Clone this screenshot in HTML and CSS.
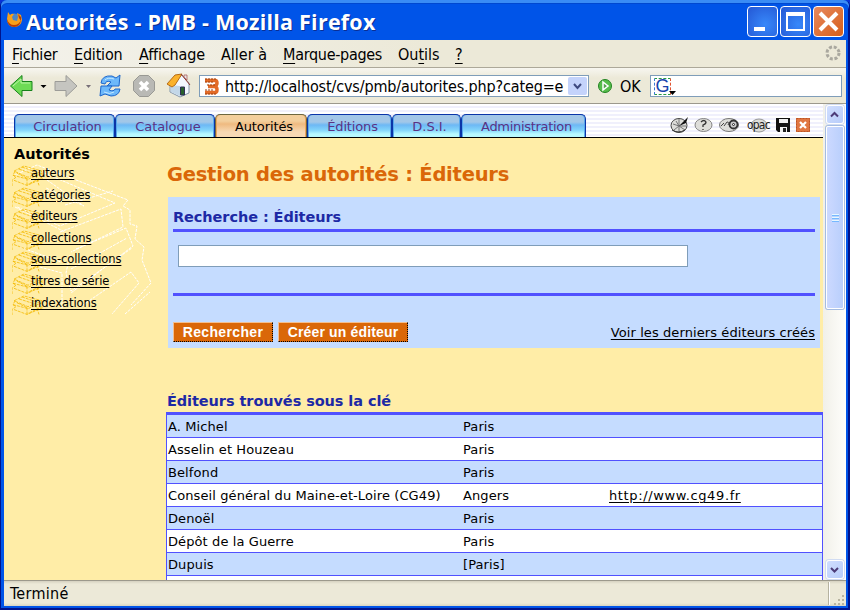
FILE: index.html
```html
<!DOCTYPE html>
<html lang="fr">
<head>
<meta charset="utf-8">
<title>Autorités - PMB</title>
<link rel="stylesheet" href="styles.css">
</head>
<body>
<div class="window">
  <header class="titlebar">
    <svg class="fox" width="16" height="16" viewBox="0 0 16 16"><circle cx="8.500" cy="7" r="5.500" fill="#4b86c8"/><path d="M2 0l2 3q2-2 4-1L6 5l1 3 4 1 1-4-1-4 4 2 1 5q-1 7-8 7-7-1-7-8z" fill="#f7a01c"/><path d="M1 7q2 6 7 6 5 0 7-5-1 7-7 7-7-1-7-8M12 2l3 3v4l-2-3z" fill="#b83c08"/></svg>
    <span class="caption">Autorités - PMB - Mozilla Firefox</span>
    <div class="winbtns">
      <span class="wb"><svg width="29" height="29"><path d="M6 20h11v4H6z" fill="#fff"/></svg></span>
      <span class="wb"><svg width="29" height="29"><path d="M5 5h19v19H5zM7 9v13h15V9z" fill="#fff" fill-rule="evenodd"/></svg></span>
      <span class="wb close"><svg width="29" height="29"><path d="M6 6l17 17M23 6L6 23" stroke="#fff" stroke-width="4"/></svg></span>
    </div>
  </header>
  <nav class="menubar">
    <span class="m1"><u>F</u>ichier</span><span class="m2"><u>E</u>dition</span><span class="m3"><u>A</u>ffichage</span><span class="m4">A<u>l</u>ler à</span><span class="m5"><u>M</u>arque-pages</span><span class="m6">Ou<u>t</u>ils</span><span class="m7"><u>?</u></span>
    <svg class="throbber" width="16" height="16"><circle cx="8" cy="8" r="6" fill="none" stroke="#aaa89f" stroke-width="3" stroke-dasharray="3 1.712"/></svg>
  </nav>
  <div class="toolbar">
    <svg class="navicons" width="190" height="34" viewBox="4 69 190 34">
      <path d="M10.500 86L22 75.500v6h10v9H22v6z" fill="#6edb55" stroke="#16821b"/><path d="M13 86l8-7v4h9" fill="none" stroke="#b9f5a5"/>
      <path d="M40.500 85h6L43.500 88z" fill="#000"/>
      <path d="M77 86L66 75.500v6H55v9h11v6z" fill="#c5c5c0" stroke="#9c9c98"/>
      <path d="M86 85h5l-2.500 3z" fill="#776f78"/>
      <path d="M101 83q1-8 11-7l4 2 4-3-1 11h-12l4-4q-5-2-6 2z" fill="#6db8fa" stroke="#1c66cc"/><path d="M120 89q-1 7-9 7l-6-2-5 2 1-10h11l-3 4q5 2 6-1z" fill="#6db8fa" stroke="#1c66cc"/><path d="M105 80q3-3 9-1M104 92q6 3 10 0" fill="none" stroke="#c5e8ff"/>
      <path d="M139.500 75.500h9l6 6v9l-6 6h-9l-6-6v-9z" fill="#b9b9b5" stroke="#999994"/><path d="M140 82l8 8M148 82l-8 8" stroke="#fff" stroke-width="3.500"/>
      <path d="M170 84v8l10 5 9-4v-10l-7-8z" fill="#f3f8ff" stroke="#8396a9"/><path d="M180 86v10l-9-4v-7z" fill="#c3d7e8"/><path d="M167 84l8-9 7-1-7 11-3 2z" fill="#fbb22c" stroke="#b66c18"/><path d="M181 74l9 11" stroke="#92382e"/><path d="M184 75h3v5l-3-3z" fill="#e5e4e8" stroke="#a6524c" stroke-width=".7"/><path d="M180.500 87h4v8h-4z" fill="#27602c" stroke="#302e58"/>
    </svg>
    <div class="address">
      <svg width="16" height="17"><path d="M1 2.500h10q2 0 2 2.500t-3 3.500H4M10 8.500q3 0 3 3t-2 3H1" fill="none" stroke="#e36a26" stroke-width="3.500"/><path d="M1 1h11M3 7h9M1 16h11M1 4h8M1 12h8" stroke="#9d3e0a" stroke-dasharray="2 1"/></svg>
      <span class="url">http://localhost/cvs/pmb/autorites.php?categ=e</span>
      <span class="drop"><svg width="19" height="19"><path d="M6 7l3.500 4L13 7" fill="none" stroke="#3e497f" stroke-width="2"/></svg></span>
    </div>
    <svg class="go" width="16" height="16"><circle cx="8" cy="8" r="6.500" fill="#56bd4b" stroke="#238322"/><path d="M6 4l5 4-5 4z" fill="#55a44f" stroke="#fff" stroke-width="1.500"/></svg>
    <span class="ok">OK</span>
    <div class="search"><span class="google">G</span><svg class="caret" width="7" height="5"><path d="M0 0h7L3.500 4z"/></svg></div>
  </div>
  <div class="view">
    <main class="page">
      <div class="tabs">
        <a class="tab t1">Circulation</a><a class="tab t2">Catalogue</a><a class="tab t3 active">Autorités</a><a class="tab t4">Éditions</a><a class="tab t5">D.S.I.</a><a class="tab t6">Administration</a>
        <svg class="tools" width="144" height="22" viewBox="668 114 144 22">
          <g fill="#dededa" stroke="#474747"><ellipse cx="679" cy="125.500" rx="8" ry="7"/><ellipse cx="703.500" cy="125" rx="8.500" ry="6.500" stroke="#858585"/><ellipse cx="729" cy="125" rx="9.500" ry="6.500" stroke="#777"/><ellipse cx="759" cy="125.500" rx="8" ry="6.500" stroke="#999"/></g>
          <path d="M679 126l-6-2m6 2l-3-5m3 5v-7m0 7l-5 4m5-4v6m0-6l6 4m-6-4h7" stroke="#777"/><path d="M672 130q6 4 13 0" fill="none" stroke="#333"/><path d="M679 126l9-9-2 6z" fill="#111"/>
          <path d="M701 122q3-3 5 0 0 2-3 3v2M703 129v1" stroke="#333" fill="none" stroke-width="1.300"/>
          <circle cx="733.500" cy="124.500" r="4" fill="#ccc" stroke="#333" stroke-width="1.800"/><circle cx="733.500" cy="124.500" r="1" fill="#fff" stroke="#222"/><path d="M721 126l3-3m0 3l3-4q3 0 1 3" fill="none" stroke="#444"/>
          <text x="747" y="129" class="opac">opac</text>
          <path d="M776 118h14v14h-12l-2-2z" fill="#111"/><path d="M779 119h9v4h-9zM780 127h7v5h-7z" fill="#eee"/><path d="M783 128h3v4h-3z" fill="#222"/>
          <path d="M796 118h14v14h-14z" fill="#e17742"/><path d="M796.500 118.500h13v13h-13z" fill="none" stroke="#bb5526" stroke-dasharray="2 1"/><path d="M800 122l6 6m0-6l-6 6" stroke="#fff" stroke-width="2.200"/>
        </svg>
      </div>
      <div class="body">
        <aside class="side">
          <h2>Autorités</h2>
          <div class="shelf">
            <svg class="bigbooks" width="142" height="152" viewBox="12 164 142 152"><path d="M13 176l24-11 91 35-5 6 7 4v14l7 2-2 13 9 8-2 13 9 23-20 22M37 170l78 33-55 23-43-19M47 180l37 26-38-18M60 232l61-23 2 18-52 25M76 249l50-21 7 18-62 47M71 269l56-31M70 255l-4 18 5 18 61-43M36 266l26 7v35M83 305l48-33 8 11-27 31M125 314l25-22M15 207l50 25M20 247l41 15M65 205l48-14" fill="none" stroke="#fff" stroke-dasharray="3 1"/></svg>
            <ul>
              <li class="s1"><a>auteurs</a></li><li class="s2"><a>catégories</a></li><li class="s3"><a>éditeurs</a></li><li class="s4"><a>collections</a></li><li class="s5"><a>sous-collections</a></li><li class="s6"><a>titres de série</a></li><li class="s7"><a>indexations</a></li>
            </ul>
          </div>
        </aside>
        <section class="content">
          <h1>Gestion des autorités : Éditeurs</h1>
          <form class="panel">
            <h3>Recherche : Éditeurs</h3>
            <div class="field"><input type="text" aria-label="Recherche"></div>
            <div class="actions"><button type="button" class="b1">Rechercher</button><button type="button" class="b2">Créer un éditeur</button><a class="last">Voir les derniers éditeurs créés</a></div>
          </form>
          <h3 class="found">Éditeurs trouvés sous la clé</h3>
          <table>
            <tr><td>A. Michel</td><td>Paris</td><td></td></tr>
            <tr><td>Asselin et Houzeau</td><td>Paris</td><td></td></tr>
            <tr><td>Belfond</td><td>Paris</td><td></td></tr>
            <tr><td>Conseil général du Maine-et-Loire (CG49)</td><td>Angers</td><td><a>http://www.cg49.fr</a></td></tr>
            <tr><td>Denoël</td><td>Paris</td><td></td></tr>
            <tr><td>Dépôt de la Guerre</td><td>Paris</td><td></td></tr>
            <tr><td>Dupuis</td><td>[Paris]</td><td></td></tr>
            <tr><td></td><td></td><td></td></tr>
          </table>
        </section>
      </div>
    </main>
    <div class="scroll">
      <span class="sb"><svg width="17" height="17"><path d="M4 10.500L7.500 7l3.500 3.500" fill="none" stroke="#4d3c78" stroke-width="2"/></svg></span>
      <span class="thumb"><i></i></span>
      <span class="sb down"><svg width="17" height="17"><path d="M4 7l3.500 3.500L11 7" fill="none" stroke="#4d3c78" stroke-width="2"/></svg></span>
    </div>
  </div>
  <footer class="status"><span>Terminé</span><svg width="18" height="25"><path d="M.5 1v23" stroke="#b5b2a0"/><path d="M1.500 1v23" stroke="#fff"/><path d="M14 14h2v2h-2zM10 18h2v2h-2zM14 18h2v2h-2zM6 22h2v2H6zM10 22h2v2h-2zM14 22h2v2h-2z" fill="#b8b4a0"/></svg></footer>
</div>
</body>
</html>
```

FILE: styles.css
```css
* { box-sizing: border-box; }
body { margin: 0; width: 850px; height: 610px; overflow: hidden; background: #0831d9; font: 13px "DejaVu Sans", sans-serif; color: #000; }
svg { display: block; flex: none; }
h1, h2, h3, ul { margin: 0; padding: 0; }
.window { width: 850px; height: 610px; display: flex; flex-direction: column; background: #0054e8; border-radius: 6px 6px 0 0; padding: 0 4px; box-shadow: inset 1px -1px #00138c, inset -2px -2px #00138c; }
.titlebar { height: 40px; flex: none; display: flex; align-items: center; margin: 0 -3px; padding: 3px 5px 0 5px; box-shadow: inset 0 3px #3a8cf5, inset 0 4px #0048d0; border-radius: 6px 6px 0 0; }
.fox { margin-top: -3px; }
.caption { flex: 1; margin-left: 4px; font: bold 21.500px/30px "Open Sans", sans-serif; letter-spacing: .22px; color: #fff; text-shadow: 1px 1px #0b2e92; white-space: nowrap; }
.winbtns { display: flex; gap: 2px; }
.wb { width: 31px; height: 31px; border: 1px solid #fff; border-radius: 4px; background: radial-gradient(circle at 60% 60%, #3788fa, #2457d4); }
.wb.close { background: linear-gradient(135deg, #e7895f, #d75f1a); }
.menubar { height: 28px; flex: none; background: linear-gradient(90deg, #f3f2eb, #ece9d8 50%); border-bottom: 1px solid #aca899; display: flex; font: 16px/29px "DejaVu Sans Condensed", sans-serif; padding-left: 8px; white-space: nowrap; }
.menubar u { text-underline-offset: 3px; text-decoration-thickness: 1px; }
.menubar span { flex: none; }
.m1 { width: 62px; letter-spacing: -.2px; } .m2 { width: 65px; letter-spacing: -.2px; } .m3 { width: 82px; letter-spacing: -.15px; } .m4 { width: 62px; letter-spacing: 0; } .m5 { width: 115px; letter-spacing: -.3px; } .m6 { width: 57px; letter-spacing: 0; }
.throbber { margin: 5px 5px 0 auto; }
.toolbar { height: 36px; flex: none; padding-top: 1px; background: linear-gradient(#f7f6f0, #ece9d8 10px, #ece9d8); border-bottom: 1px solid #9c998c; display: flex; align-items: center; }
.address { width: 390px; height: 22px; margin-left: 5px; border: 1px solid #7f9db9; background: #fff; display: flex; align-items: center; padding: 0 1px 0 4px; }
.url { flex: 1; margin-left: 5px; padding-top: 1px; font: 16px/20px "DejaVu Sans Condensed", sans-serif; letter-spacing: -.14px; white-space: nowrap; overflow: hidden; }
.drop { width: 19px; height: 18px; background: #c4d3fb; border-radius: 2px; }
.go { margin-left: 8px; }
.ok { width: 30px; margin-left: 7px; padding-top: 1px; font: 16px "DejaVu Sans Condensed", sans-serif; }
.search { width: 192px; height: 22px; border: 1px solid #7f9db9; background: #fff; padding: 2px 3px 2px 3px; display: flex; }
.google { width: 17px; height: 17px; flex: none; border: 1px dashed #279b43; border-left-color: #3978d8; border-right-color: #e05231; font: 18px/15px "Liberation Sans", sans-serif; color: #1743ac; display: flex; justify-content: center; }
.caret { margin: 13px 0 0 -2px; }
.view { height: 476px; flex: none; display: flex; }
.page { width: 819px; height: 476px; overflow: hidden; background: #ffeda7; }
.tabs { height: 34px; padding: 10px 0 0 10px; display: flex; border-bottom: 1px solid #000; background: repeating-linear-gradient(#fff 0 2px, #f0f0fc 2px 4px); }
.tab { height: 23px; border: solid #0b35a8; border-width: 1px 1px 0; border-radius: 5px 5px 0 0; background: linear-gradient(#a2c7e8 0 7px, #6db8f5 10px, #82d4fb 15px, #b8f9ff 19px); color: #5b3283; text-align: center; line-height: 24px; white-space: nowrap; padding-left: 6px; box-shadow: inset 1px 0 #58a7eb, inset -1px 0 #58a7eb; }
.t1 { width: 101px; } .t2 { width: 100px; } .t3 { width: 92px; } .t4 { width: 85px; letter-spacing: -.15px; } .t5 { width: 69px; } .t6 { width: 125px; letter-spacing: -.3px; }
.t1, .t2, .t3 { letter-spacing: -.1px; }
.tab.active { color: #000; border-color: #6d6740; background: linear-gradient(#f3cf9d 0 6px, #efba80 9px, #f7d9b4 17px); box-shadow: inset 1px 0 #efa65c, inset -1px 0 #efa65c; }
.tools { margin-left: 82px; }
.opac { font: 12px "DejaVu Sans Condensed", sans-serif; fill: #222; letter-spacing: -.8px; }
.body { display: flex; }
.side { width: 162px; padding: 6px 0 0 8px; }
.side h2 { font-size: 14.500px; line-height: 20px; padding-left: 2px; }
.shelf { position: relative; }
.bigbooks { position: absolute; left: 0; top: 0; }
.shelf ul { position: relative; list-style: none; }
.shelf li { height: 21.600px; line-height: 19px; padding-left: 19px; font-size: 11.500px; background: url("data:image/svg+xml,%3Csvg xmlns='http://www.w3.org/2000/svg' width='34' height='22'%3E%3Cpath d='M2 7L12 2l18 5-14 6zM1 11l15 4 14-6M2 16l13 5 16-7M3 7l-2 4 3 2-4 3v6M5 9l10 5M30 8v5l-14 7M24 11l3 10M7 5l15 5M10 3l14 5M15 14v7' fill='none' stroke='%23f3b900' stroke-width='.8' stroke-dasharray='3 1'/%3E%3C/svg%3E") no-repeat; }
.side a, .last, td a { text-decoration: underline; text-decoration-thickness: 1px; text-underline-offset: 2px; }
.side a { letter-spacing: -.08px; }
.content { width: 657px; }
h1 { font-size: 19.500px; letter-spacing: -.24px; line-height: 24px; color: #da6708; padding: 25px 0 0 1px; white-space: nowrap; }
.panel { margin: 10px 3px 0 2px; height: 151px; background: #c5dcff; padding: 10px 5px 0; }
h3 { font-size: 14.500px; letter-spacing: -.08px; line-height: 20px; color: #1d29a5; white-space: nowrap; }
.panel h3 { height: 25px; border-bottom: 3px solid #5151ff; }
.field { height: 64px; padding: 13px 5px 0; border-bottom: 3px solid #5151ff; }
.field input { display: block; width: 510px; height: 22px; border: 1px solid #7f9db9; background: #fff; padding: 0; }
.actions { display: flex; margin-top: 26px; gap: 5px; }
button { height: 20px; padding: 0; border: 1px solid #f3bf90; border-right: 1px dotted #000; border-bottom: 1px dotted #000; background: #da6708; color: #fff; font: bold 14px/17px "Liberation Sans", sans-serif; letter-spacing: .15px; }
.b1 { width: 100px; letter-spacing: .35px; } .b2 { width: 130px; }
.last { margin-left: auto; line-height: 22px; letter-spacing: .09px; white-space: nowrap; }
.found { margin: 43px 0 0 1px; }
table { width: 657px; table-layout: fixed; border-collapse: separate; border-spacing: 0; border: solid #5151ff; border-width: 3px 1px 0; margin-top: 1px; }
td { height: 23px; padding: 1px 0 0 1px; border-bottom: 1px solid #5151ff; background: #fff; line-height: 21px; letter-spacing: .1px; white-space: nowrap; }
td a { letter-spacing: .62px; }
tr:nth-child(odd) td { background: #c5dcff; }
td:first-child { width: 295px; } td:nth-child(2) { width: 146px; }
.scroll { width: 23px; padding: 0 2px 1px 3px; background: linear-gradient(90deg, #f1f0e9, #fefefb); display: flex; flex-direction: column; }
.sb { width: 18px; height: 19px; flex: none; border-radius: 3px; border: 1px solid #fff; background: linear-gradient(135deg, #d0deff, #b8cdfa); box-shadow: 0 0 0 1px #d1dcf2; margin-top: 1px; }
.thumb { width: 18px; height: 183px; flex: none; margin-top: 2px; border: 1px solid #fff; border-radius: 2px; background: linear-gradient(90deg, #ccd9ff, #b9cffc); box-shadow: 0 0 0 1px #a5bce1; display: flex; align-items: center; justify-content: center; }
.thumb i { width: 7px; height: 8px; margin-top: 0; background: repeating-linear-gradient(#e8f7ff 0 1px, #76b8ff 1px 2px, #b9d4fc 2px 3px); }
.down { margin-top: auto; }
.status { height: 26px; flex: none; border-top: 1px solid #9c998c; background: linear-gradient(#d5d1c0, #ece9d8 3px 22px, #d8d5c2); display: flex; justify-content: space-between; font: 16px/25px "DejaVu Sans Condensed", sans-serif; letter-spacing: .3px; padding-left: 6px; }
```
